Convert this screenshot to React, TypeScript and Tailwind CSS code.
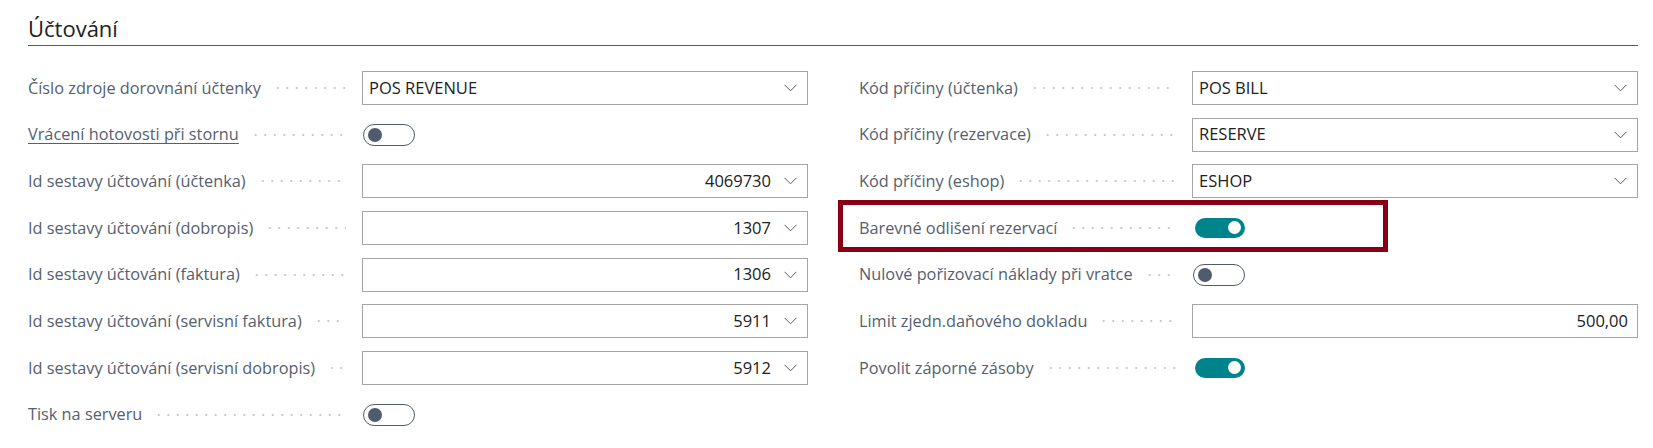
import React from "react";

type Row =
  | { label: string; kind: "select"; value: string; align?: "left" | "right"; underline?: boolean; highlight?: boolean }
  | { label: string; kind: "toggle"; on: boolean; underline?: boolean; highlight?: boolean }
  | { label: string; kind: "input"; value: string; underline?: boolean; highlight?: boolean };

const left: Row[] = [
  { label: "Číslo zdroje dorovnání účtenky", kind: "select", value: "POS REVENUE", align: "left" },
  { label: "Vrácení hotovosti při stornu", kind: "toggle", on: false, underline: true },
  { label: "Id sestavy účtování (účtenka)", kind: "select", value: "4069730", align: "right" },
  { label: "Id sestavy účtování (dobropis)", kind: "select", value: "1307", align: "right" },
  { label: "Id sestavy účtování (faktura)", kind: "select", value: "1306", align: "right" },
  { label: "Id sestavy účtování (servisní faktura)", kind: "select", value: "5911", align: "right" },
  { label: "Id sestavy účtování (servisní dobropis)", kind: "select", value: "5912", align: "right" },
  { label: "Tisk na serveru", kind: "toggle", on: false },
];

const right: Row[] = [
  { label: "Kód příčiny (účtenka)", kind: "select", value: "POS BILL", align: "left" },
  { label: "Kód příčiny (rezervace)", kind: "select", value: "RESERVE", align: "left" },
  { label: "Kód příčiny (eshop)", kind: "select", value: "ESHOP", align: "left" },
  { label: "Barevné odlišení rezervací", kind: "toggle", on: true, highlight: true },
  { label: "Nulové pořizovací náklady při vratce", kind: "toggle", on: false },
  { label: "Limit zjedn.daňového dokladu", kind: "input", value: "500,00" },
  { label: "Povolit záporné zásoby", kind: "toggle", on: true },
];

function Chevron() {
  return (
    <svg width="13" height="8" viewBox="0 0 13 8" className="shrink-0">
      <path d="M0.5 0.8 L6.5 6.8 L12.5 0.8" fill="none" stroke="#5a5a5a" strokeWidth="1" />
    </svg>
  );
}

function Toggle({ on }: { on: boolean }) {
  if (on) {
    return (
      <div className="ml-[3px] w-[50px] h-[20px] rounded-full bg-[#00848b] flex items-center justify-end pr-[4px]">
        <div className="w-[13px] h-[13px] rounded-full bg-white" />
      </div>
    );
  }
  return (
    <div className="ml-[1px] w-[52px] h-[22px] rounded-full border border-[#505c6d] flex items-center pl-[4px]">
      <div className="w-[14px] h-[14px] rounded-full bg-[#505c6d]" />
    </div>
  );
}

function Field({ row }: { row: Row }) {
  if (row.kind === "toggle") {
    return (
      <div className="w-[446px] h-[34px] flex items-center">
        <Toggle on={row.on} />
      </div>
    );
  }
  if (row.kind === "input") {
    return (
      <div className="w-[446px] h-[34px] border border-[#a6a6a6] flex items-center justify-end pr-[9px] text-[16.5px] text-[#212121]">
        {row.value}
      </div>
    );
  }
  return (
    <div className="w-[446px] h-[34px] border border-[#a6a6a6] flex items-center pl-[6px] pr-[10px] text-[16.5px] text-[#212121]">
      {row.align === "right" ? (
        <>
          <span className="flex-1 text-right pr-[13px]">{row.value}</span>
          <Chevron />
        </>
      ) : (
        <>
          <span className="flex-1">{row.value}</span>
          <Chevron />
        </>
      )}
    </div>
  );
}

function FieldRow({ row, labelWidth }: { row: Row; labelWidth: string }) {
  return (
    <div className="relative flex items-center h-[34px]">
      <div className={`${labelWidth} flex items-center pr-[16px]`}>
        <span
          className={
            "whitespace-nowrap text-[16.3px] text-[#55606f] " +
            (row.underline ? "underline underline-offset-[3px] decoration-[1px]" : "")
          }
        >
          {row.label}
        </span>
        <div className="flex-1 ml-[12px] h-[4px] bg-[radial-gradient(circle,#c9c9c9_0.9px,transparent_1.3px)] bg-[length:9.5px_4px] bg-repeat-x bg-left" />
      </div>
      <Field row={row} />
      {row.highlight && (
        <div className="absolute left-[-21px] top-[-11px] w-[550px] h-[52px] border-[5px] border-[#880015] pointer-events-none" />
      )}
    </div>
  );
}

export default function App() {
  return (
    <div className="w-[1653px] h-[448px] bg-white pl-[28px] pr-[15px] font-['Open_Sans','Noto_Sans',sans-serif] overflow-hidden">
      <div className="pt-[13px] h-[46px] border-b border-[#505c6d] text-[22px] leading-[30px] text-[#212121]">
        Účtování
      </div>
      <div className="grid grid-cols-[780px_779px] gap-x-[51px] pt-[25px]">
        <div className="flex flex-col gap-[12.67px]">
          {left.map((r) => (
            <FieldRow key={r.label} row={r} labelWidth="w-[334px]" />
          ))}
        </div>
        <div className="flex flex-col gap-[12.67px]">
          {right.map((r) => (
            <FieldRow key={r.label} row={r} labelWidth="w-[333px]" />
          ))}
        </div>
      </div>
    </div>
  );
}
